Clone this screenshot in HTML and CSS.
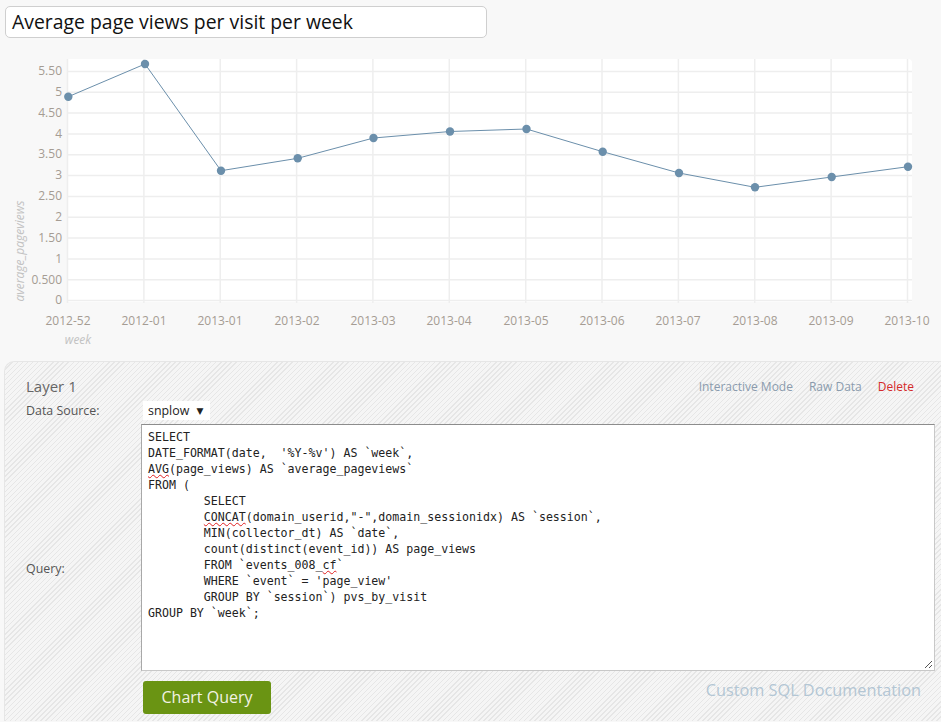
FILE: index.html
```html
<!DOCTYPE html>
<html>
<head>
<meta charset="utf-8">
<link rel="stylesheet" href="styles.css">
</head>
<body>
<div class="title-box">Average page views per visit per week</div>

<svg class="chart" width="941" height="314" viewBox="0 0 941 314" xmlns="http://www.w3.org/2000/svg">
  <path d="M67 15 H908 Q912 15 912 19 V258 H67 Z" fill="#ffffff"/>
  <g stroke="#eeeeee" stroke-width="1.5" fill="none">
    <line x1="67" x2="912" y1="256.5" y2="256.5"/>
    <line x1="67" x2="912" y1="235.7" y2="235.7"/>
    <line x1="67" x2="912" y1="214.9" y2="214.9"/>
    <line x1="67" x2="912" y1="194.0" y2="194.0"/>
    <line x1="67" x2="912" y1="173.2" y2="173.2"/>
    <line x1="67" x2="912" y1="152.4" y2="152.4"/>
    <line x1="67" x2="912" y1="131.6" y2="131.6"/>
    <line x1="67" x2="912" y1="110.8" y2="110.8"/>
    <line x1="67" x2="912" y1="89.9" y2="89.9"/>
    <line x1="67" x2="912" y1="69.1" y2="69.1"/>
    <line x1="67" x2="912" y1="48.3" y2="48.3"/>
    <line x1="67" x2="912" y1="27.5" y2="27.5"/>
    <line y1="15" y2="259" x1="67.5" x2="67.5"/>
    <line y1="15" y2="259" x1="143.9" x2="143.9"/>
    <line y1="15" y2="259" x1="220.2" x2="220.2"/>
    <line y1="15" y2="259" x1="296.6" x2="296.6"/>
    <line y1="15" y2="259" x1="372.9" x2="372.9"/>
    <line y1="15" y2="259" x1="449.3" x2="449.3"/>
    <line y1="15" y2="259" x1="525.7" x2="525.7"/>
    <line y1="15" y2="259" x1="602.0" x2="602.0"/>
    <line y1="15" y2="259" x1="678.4" x2="678.4"/>
    <line y1="15" y2="259" x1="754.7" x2="754.7"/>
    <line y1="15" y2="259" x1="831.1" x2="831.1"/>
    <line y1="15" y2="259" x1="907.5" x2="907.5"/>
  </g>
  <g class="ylab" text-anchor="end">
    <text x="62" y="31">5.50</text>
    <text x="62" y="52">5</text>
    <text x="62" y="73">4.50</text>
    <text x="62" y="94">4</text>
    <text x="62" y="114">3.50</text>
    <text x="62" y="135">3</text>
    <text x="62" y="156">2.50</text>
    <text x="62" y="177">2</text>
    <text x="62" y="198">1.50</text>
    <text x="62" y="219">1</text>
    <text x="62" y="240">0.500</text>
    <text x="62" y="260">0</text>
  </g>
  <g class="xlab" text-anchor="middle">
    <text x="68" y="281">2012-52</text>
    <text x="144" y="281">2012-01</text>
    <text x="220" y="281">2013-01</text>
    <text x="297" y="281">2013-02</text>
    <text x="373" y="281">2013-03</text>
    <text x="449" y="281">2013-04</text>
    <text x="526" y="281">2013-05</text>
    <text x="602" y="281">2013-06</text>
    <text x="678" y="281">2013-07</text>
    <text x="755" y="281">2013-08</text>
    <text x="831" y="281">2013-09</text>
    <text x="907" y="281">2013-10</text>
  </g>
  <text class="axis-title" x="78" y="300" text-anchor="middle">week</text>
  <text class="axis-title" transform="translate(24 207) rotate(-90)" text-anchor="middle">average_pageviews</text>
  <polyline fill="none" stroke="#6b8fab" stroke-width="1" points="68.3,52.7 145,20 221,126.7 297.7,114.3 373.5,94 450,87.5 526.5,85 602.7,107.7 679,129 755,143.3 831.7,133 908,122.7"/>
  <g fill="#6b8fab">
    <circle cx="68.3" cy="52.7" r="4.2"/>
    <circle cx="145" cy="20" r="4.2"/>
    <circle cx="221" cy="126.7" r="4.2"/>
    <circle cx="297.7" cy="114.3" r="4.2"/>
    <circle cx="373.5" cy="94" r="4.2"/>
    <circle cx="450" cy="87.5" r="4.2"/>
    <circle cx="526.5" cy="85" r="4.2"/>
    <circle cx="602.7" cy="107.7" r="4.2"/>
    <circle cx="679" cy="129" r="4.2"/>
    <circle cx="755" cy="143.3" r="4.2"/>
    <circle cx="831.7" cy="133" r="4.2"/>
    <circle cx="908" cy="122.7" r="4.2"/>
  </g>
</svg>

<div class="layer">
  <div class="layer-head">
    <div class="layer-title">Layer 1</div>
    <div class="layer-links">
      <span class="link">Interactive Mode</span>
      <span class="link">Raw Data</span>
      <span class="link delete">Delete</span>
    </div>
  </div>
  <div class="row source-row">
    <div class="label">Data Source:</div>
    <div class="select">snplow <span class="caret">▼</span></div>
  </div>
  <div class="row query-row">
    <div class="label query-label">Query:</div>
    <div class="query">
<pre class="code">SELECT
DATE_FORMAT(date,  '%Y-%v') AS `week`,
<span class="spell">AVG</span>(page_views) AS `average_pageviews`
FROM (
	SELECT
	<span class="spell">CONCAT</span>(domain_userid,"-",domain_sessionidx) AS `session`,
	MIN(collector_dt) AS `date`,
	count(distinct(event_id)) AS page_views
	FROM `events_008_<span class="spell">cf</span>`
	WHERE `event` = 'page_view'
	GROUP BY `session`) pvs_by_visit
GROUP BY `week`;</pre>
      <svg class="grip" width="9" height="9" viewBox="0 0 9 9"><path d="M8 1 L1 8 M8 5 L5 8" stroke="#555" stroke-width="1"/></svg>
    </div>
  </div>
  <div class="row btn-row">
    <div class="button">Chart Query</div>
    <div class="doc">Custom SQL Documentation</div>
  </div>
</div>
</body>
</html>
```
FILE: styles.css
```css
html, body {
  margin: 0;
  padding: 0;
}
body {
  background: #f8f8f8;
  font-family: "Open Sans", "Liberation Sans", sans-serif;
  width: 941px;
  height: 722px;
  overflow: hidden;
}
.title-box {
  margin: 6px 0 0 5px;
  width: 474px;
  height: 30px;
  padding: 0 0 0 6px;
  border: 1px solid #cfcfcf;
  border-radius: 5px;
  background: #fff;
  font-size: 19.4px;
  line-height: 30px;
  color: #111;
}
.chart {
  display: block;
  margin-top: 6px;
}
.ylab text, .xlab text {
  font-family: "Open Sans", sans-serif;
  font-size: 12px;
  fill: #a59c93;
}
.axis-title {
  font-family: "Open Sans", sans-serif;
  font-size: 12px;
  font-style: italic;
  fill: #c2c2c2;
}
.layer {
  margin: 3px 0 0 4px;
  height: 345px;
  border: 1px solid #e6e6e6;
  border-right: none;
  border-bottom: none;
  border-radius: 10px 0 0 0;
  padding: 14px 6px 0 21px;
  background: repeating-linear-gradient(-45deg, #f5f5f5 0 2.6px, #e6e6e6 2.6px 3.6px);
}
.layer-head {
  display: flex;
  justify-content: space-between;
  align-items: center;
  height: 20px;
}
.layer-title {
  font-size: 15px;
  color: #666;
}
.layer-links {
  display: flex;
  gap: 16px;
  margin-right: 21px;
  font-size: 12px;
}
.link {
  color: #8a9bad;
}
.link.delete {
  color: #d42a2a;
}
.row {
  display: flex;
}
.label {
  width: 115px;
  flex: none;
  font-size: 12.4px;
  color: #555;
}
.source-row {
  margin-top: 4px;
  height: 21px;
  align-items: center;
}
.select {
  margin-left: 2px;
  height: 19px;
  width: 62px;
  padding-left: 5px;
  background: #fff;
  font-size: 12.4px;
  line-height: 19px;
  color: #222;
}
.caret {
  font-size: 9px;
  margin-left: 4px;
  font-family: "DejaVu Sans", sans-serif;
  vertical-align: 1px;
}
.query-row {
  margin-top: 3px;
  align-items: flex-start;
}
.query-label {
  padding-top: 136px;
}
.query {
  position: relative;
  flex: 1;
  height: 245px;
  background: #fff;
  border: 1px solid #c8c8c8;
  border-top-color: #8c8c8c;
  border-left-color: #a8a8a8;
}
.code {
  margin: 0;
  padding: 4px 0 0 6px;
  font-family: "DejaVu Sans Mono", "Liberation Mono", monospace;
  font-size: 11.6px;
  line-height: 16px;
  color: #222;
  tab-size: 8;
  -moz-tab-size: 8;
  white-space: pre;
}
.spell {
  text-decoration: underline wavy #e02020;
  text-decoration-thickness: 1px;
  text-underline-offset: 1px;
}
.grip {
  position: absolute;
  right: 1px;
  bottom: 1px;
}
.btn-row {
  margin-top: 10px;
  align-items: center;
  justify-content: space-between;
}
.button {
  margin-left: 117px;
  width: 128px;
  height: 33px;
  border-radius: 3px;
  background: #6a9413;
  color: #f2f2e4;
  font-size: 16px;
  line-height: 33px;
  text-align: center;
}
.doc {
  margin-right: 14px;
  margin-top: -16px;
  font-size: 16.3px;
  color: #b3c6d4;
}
```
